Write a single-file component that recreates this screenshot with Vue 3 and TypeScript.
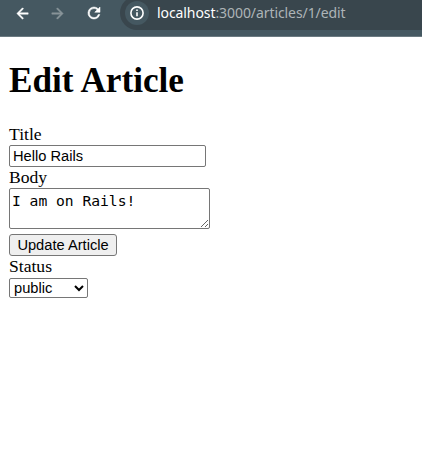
<script setup lang="ts">
import { ref } from 'vue'

const title = ref<string>('Hello Rails')
const body = ref<string>('I am on Rails!')
const status = ref<string>('public')
const statuses: string[] = ['public', 'private', 'archived']
</script>

<template>
  <div class="window">
    <header class="toolbar">
      <svg class="icon back" viewBox="0 0 24 24"><path d="M20 11H7.83l5.59-5.59L12 4l-8 8 8 8 1.41-1.41L7.83 13H20z" /></svg>
      <svg class="icon forward" viewBox="0 0 24 24"><path d="M12 4l-1.41 1.41L16.17 11H4v2h12.17l-5.58 5.59L12 20l8-8z" /></svg>
      <svg class="icon reload" viewBox="0 0 24 24"><path d="M17.65 6.35A7.96 7.96 0 0 0 12 4a8 8 0 1 0 7.73 10h-2.08A6 6 0 1 1 12 6c1.66 0 3.14.69 4.22 1.78L13 11h7V4z" /></svg>
      <div class="address">
        <span class="info">
          <svg viewBox="0 0 16 16"><circle cx="8" cy="8" r="6.1" /><path d="M8 7.2v4M8 4.4v1.5" /></svg>
        </span>
        <span class="url"><span class="host">localhost</span>:3000/articles/1/edit</span>
      </div>
    </header>
    <main class="page">
      <h1>Edit Article</h1>
      <form @submit.prevent>
        <div class="field">
          <label for="title">Title</label>
          <input id="title" v-model="title" type="text" />
        </div>
        <div class="field">
          <label for="body">Body</label>
          <textarea id="body" v-model="body"></textarea>
        </div>
        <button type="submit">Update Article</button>
        <div class="field">
          <label for="status">Status</label>
          <select id="status" v-model="status">
            <option v-for="s in statuses" :key="s" :value="s">{{ s }}</option>
          </select>
        </div>
      </form>
    </main>
  </div>
</template>

<style>
body {
  background: #fff;
}
</style>

<style scoped>
.window {
  height: 451px;
  overflow: hidden;
}
.toolbar {
  box-sizing: border-box;
  display: flex;
  height: 37px;
  padding-left: 13.5px;
  background: #455861;
  border-bottom: 1px solid #6b7a81;
  overflow: hidden;
}
.icon {
  flex: none;
  width: 17px;
  height: 17px;
  margin-top: 4.5px;
  margin-right: 18.5px;
  fill: #fff;
  stroke: #fff;
  stroke-width: 0.7;
}
.forward {
  margin-right: 19px;
  fill: #89959a;
  stroke: #89959a;
}
.reload {
  width: 18px;
  height: 18px;
  margin-top: 4px;
  margin-right: 17px;
}
.address {
  flex: 1;
  display: flex;
  align-items: center;
  height: 34px;
  margin-top: -4px;
  padding-left: 5px;
  border-radius: 17px 0 0 17px;
  background: #39464d;
}
.info {
  display: flex;
  align-items: center;
  justify-content: center;
  width: 24px;
  height: 24px;
  margin-right: 8px;
  border-radius: 50%;
  background: #455861;
}
.info svg {
  width: 16px;
  height: 16px;
  fill: none;
  stroke: #fff;
  stroke-width: 1.6;
}
.url {
  font: 14px/20px "Noto Sans", sans-serif;
  letter-spacing: -0.08px;
  color: #adb4b7;
  white-space: nowrap;
}
.host {
  color: #fff;
}
.page {
  padding: 0 9px;
  font: 17.6px/20px "Liberation Serif", serif;
  color: #000;
}
h1 {
  margin: 24px 0 23px;
  font-size: 35.2px;
  line-height: 40px;
  font-weight: bold;
}
.field {
  display: flex;
  flex-direction: column;
  align-items: flex-start;
}
label {
  height: 21px;
  line-height: 21px;
}
input,
textarea,
select,
button {
  box-sizing: border-box;
  margin: 0;
  border: 1px solid #767676;
  border-radius: 2px;
  background: #fff;
  color: #000;
  font: 14.667px "Liberation Sans", sans-serif;
}
input {
  width: 197px;
  height: 22px;
  padding: 1px 3px;
}
textarea {
  width: 201px;
  height: 41px;
  padding: 3px 2px 0;
  font: 14.667px/17px "DejaVu Sans Mono", monospace;
  letter-spacing: -0.02px;
}
button {
  display: block;
  width: 108px;
  height: 22px;
  margin-top: 5px;
  padding: 0;
  border-radius: 3px;
  background: #efefef;
}
select {
  width: 79px;
  height: 20px;
  margin-top: 1px;
}
</style>
